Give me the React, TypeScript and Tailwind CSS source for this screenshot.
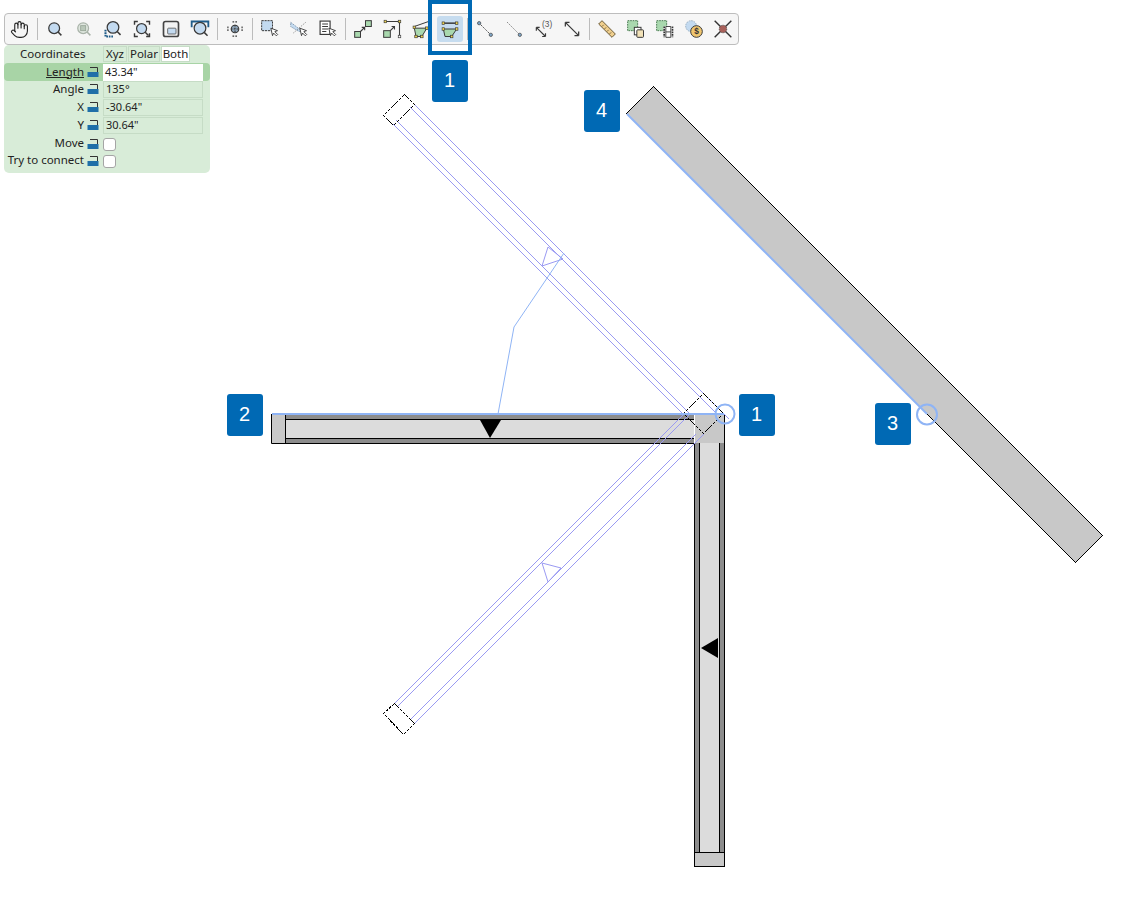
import { Hand } from "lucide-react";
import type { ReactNode } from "react";

const INK = "#3a3a3a";
const SKY = "#c3daf0";
const LEAF = "#a9d8ae";
const NAVY = "#1f5c8a";

function Glyph({ children }: { children: ReactNode }) {
  return (
    <svg width="20" height="20" viewBox="0 0 24 24" fill="none">
      {children}
    </svg>
  );
}

function Lens({ cx = 11, cy = 11, r = 6.5, fill = SKY, stroke = INK }) {
  return (
    <>
      <circle cx={cx} cy={cy} r={r} fill={fill} stroke={stroke} strokeWidth="1.5" />
      <path d={`M${cx + r * 0.72} ${cy + r * 0.72}l4 4`} stroke={stroke} strokeWidth="1.8" />
    </>
  );
}

function Pointer({ x = 13, y = 11 }) {
  return (
    <path
      d={`M${x} ${y}l8 3-3.2 1.2 3.4 3.4-1.6 1.6-3.4-3.4L15 20z`}
      fill="#fff"
      stroke={INK}
      strokeWidth="1.1"
    />
  );
}

function Node({ x, y, fill = "#f2d64b" }: { x: number; y: number; fill?: string }) {
  return <rect x={x - 1.5} y={y - 1.5} width="3" height="3" fill={fill} stroke={INK} strokeWidth="0.8" />;
}

const icons: Record<string, ReactNode> = {
  zoom: (
    <Glyph>
      <Lens />
    </Glyph>
  ),
  zoomGrey: (
    <Glyph>
      <Lens fill="#dfe6df" stroke="#a9b3a9" />
      <rect x="8" y="8" width="6" height="6" fill="#b9c7b9" stroke="#96a596" />
    </Glyph>
  ),
  zoomWindow: (
    <Glyph>
      <path d="M3 13v8h9" stroke={NAVY} strokeWidth="2.5" strokeDasharray="2 1" />
      <Lens cx={12} cy={10} r={7} />
    </Glyph>
  ),
  zoomFit: (
    <Glyph>
      <path d="M3 7V3h4M17 3h4v4M3 17v4h4M21 17v4h-4" stroke={INK} strokeWidth="1.7" />
      <Lens cx={11.5} cy={11.5} r={6} />
    </Glyph>
  ),
  zoomBox: (
    <Glyph>
      <rect x="3" y="3" width="18" height="18" rx="2.5" fill="#f3f3f3" stroke="#444" strokeWidth="2" />
      <rect x="8" y="11" width="10" height="7" rx="1" fill={SKY} stroke="#555" />
    </Glyph>
  ),
  zoomAll: (
    <Glyph>
      <path d="M2 10V3h20v7" stroke={NAVY} strokeWidth="2.2" />
      <Lens cx={12} cy={11} r={7} />
    </Glyph>
  ),
  target: (
    <Glyph>
      <circle cx="12" cy="12" r="4.5" fill="#8fa6bb" stroke={INK} strokeWidth="1.4" />
      <path
        d="M9 3.500h6M9 20.500h6M3.500 9v6M20.500 9v6M12 7v10M7 12h10"
        stroke={INK}
        strokeWidth="1.4"
        strokeDasharray="2 1.4"
      />
    </Glyph>
  ),
  selectBox: (
    <Glyph>
      <rect x="2" y="2" width="13" height="12" fill={SKY} stroke={INK} strokeWidth="1.2" strokeDasharray="2.5 1" />
      <Pointer />
    </Glyph>
  ),
  selectCross: (
    <Glyph>
      <path d="M2 4l13 10-3 1L2 9z" fill={SKY} stroke="#8aa0b5" strokeWidth="1.2" strokeDasharray="2 1" />
      <path d="M20 4L5 17" stroke="#777" strokeDasharray="1.5 1.5" />
      <Pointer />
    </Glyph>
  ),
  selectList: (
    <Glyph>
      <rect x="2.500" y="2.500" width="12" height="16" fill="#fff" stroke={INK} strokeWidth="1.4" />
      <path d="M5 6h7M5 9h7M5 12h7M5 15h5" stroke={INK} strokeWidth="1.3" />
      <Pointer />
    </Glyph>
  ),
  segment: (
    <Glyph>
      <rect x="2" y="15" width="7" height="7" fill={LEAF} stroke={INK} strokeWidth="1.2" />
      <rect x="15" y="2" width="7" height="7" fill={LEAF} stroke={INK} strokeWidth="1.2" />
      <path d="M9 15l5-5M10.500 10h3.500v3.500" stroke={INK} strokeWidth="1.3" />
    </Glyph>
  ),
  corner: (
    <Glyph>
      <path d="M4 3h17v18" stroke={INK} strokeWidth="1.3" />
      <rect x="2" y="14" width="8" height="8" fill={LEAF} stroke={INK} strokeWidth="1.2" />
      <path d="M10 14l5-5M11.500 9H15v3.500" stroke={INK} strokeWidth="1.3" />
      <Node x={4} y={3} />
      <Node x={21} y={3} />
      <Node x={21} y={21} fill="#fff" />
    </Glyph>
  ),
  polygon: (
    <Glyph>
      <path d="M4 9l17-6v8" stroke={INK} strokeWidth="1.2" />
      <path d="M4 11h15l-6 10H6z" fill={LEAF} stroke={INK} strokeWidth="1.2" />
      <Node x={4} y={10} />
      <Node x={19} y={11} />
      <Node x={13} y={21} />
      <Node x={6} y={21} />
    </Glyph>
  ),
  polygonLine: (
    <Glyph>
      <path d="M5 5h14" stroke={INK} strokeWidth="1.8" />
      <path d="M4 12h16l-6 9H6z" fill={LEAF} stroke={INK} strokeWidth="1.2" />
      <Node x={4} y={5} />
      <Node x={20} y={5} />
      <Node x={4} y={12} />
      <Node x={20} y={12} />
      <Node x={14} y={21} />
    </Glyph>
  ),
  line: (
    <Glyph>
      <path d="M5 5l14 14" stroke={INK} strokeDasharray="2 1" />
      <circle cx="5" cy="5" r="2" fill="#7fa6c8" stroke={INK} strokeWidth="0.8" />
      <circle cx="19" cy="19" r="2" fill="#7fa6c8" stroke={INK} strokeWidth="0.8" />
    </Glyph>
  ),
  lineEnd: (
    <Glyph>
      <path d="M4 4l15 15" stroke={INK} strokeDasharray="1.5 2" />
      <circle cx="19" cy="19" r="2" fill="#7fa6c8" stroke={INK} strokeWidth="0.8" />
    </Glyph>
  ),
  stretchCount: (
    <Glyph>
      <path d="M4 10l11 11M4 10v4M4 10h4M15 21v-4M15 21h-4" stroke={INK} strokeWidth="1.4" />
      <text x="17" y="10" textAnchor="middle" fontSize="10" fill="#555" fontFamily="Liberation Sans, sans-serif">
        (3)
      </text>
    </Glyph>
  ),
  stretch: (
    <Glyph>
      <path d="M4 4l16 16M4 4v5M4 4h5M20 20v-5M20 20h-5" stroke={INK} strokeWidth="1.5" />
    </Glyph>
  ),
  ruler: (
    <Glyph>
      <path d="M6 2L22 18 18 22 2 6z" fill="#f0cf8e" stroke="#6b5a36" strokeWidth="1.2" />
      <path d="M8 7l-2 2M11 10l-2 2M14 13l-2 2M17 16l-2 2" stroke="#6b5a36" />
    </Glyph>
  ),
  copyArea: (
    <Glyph>
      <rect x="2" y="2" width="12" height="12" fill={LEAF} stroke="#4d7d55" strokeWidth="1.2" strokeDasharray="2 1" />
      <rect x="10" y="10" width="8" height="9" fill="#fff" stroke={INK} strokeWidth="1.2" />
      <rect x="13" y="13" width="8" height="9" rx="1" fill="#f2e2b8" stroke={INK} strokeWidth="1.2" />
    </Glyph>
  ),
  filmArea: (
    <Glyph>
      <rect x="2" y="2" width="12" height="12" fill={LEAF} stroke="#4d7d55" strokeWidth="1.2" strokeDasharray="2 1" />
      <rect x="10" y="9" width="12" height="13" fill="#fff" />
      <path d="M11 9v13M21 9v13" stroke="#333" strokeWidth="2" strokeDasharray="2 1" />
      <path d="M13 9h6M13 15.500h6M13 22h6M13 9v13M19 9v13" stroke={INK} strokeWidth="1.1" />
    </Glyph>
  ),
  cost: (
    <Glyph>
      <circle cx="8.500" cy="8.500" r="6.500" fill={SKY} stroke="#8fa6bb" strokeDasharray="2 1" />
      <circle cx="15" cy="15" r="7" fill="#f0c66f" stroke={INK} strokeWidth="1.2" />
      <text x="15" y="18.500" textAnchor="middle" fontSize="10" fontWeight="700" fill="#333" fontFamily="Liberation Sans, sans-serif">
        $
      </text>
    </Glyph>
  ),
  remove: (
    <Glyph>
      <path d="M2 2l20 20M22 2L2 22" stroke="#333" strokeWidth="1.7" />
      <circle cx="12" cy="12" r="4.500" fill="#a8605a" stroke="#444" strokeDasharray="1.5 1" />
    </Glyph>
  ),
};

const toolGroups = [
  ["hand"],
  ["zoom", "zoomGrey", "zoomWindow", "zoomFit", "zoomBox", "zoomAll"],
  ["target"],
  ["selectBox", "selectCross", "selectList"],
  ["segment", "corner", "polygon", "polygonLine"],
  ["line", "lineEnd", "stretchCount", "stretch"],
  ["ruler", "copyArea", "filmArea", "cost", "remove"],
];

function Toolbar() {
  return (
    <div className="ml-[4px] mt-[13px] flex h-[32px] w-[735px] items-center rounded-[4px] border border-[#bdbdbd] bg-[#f6f6f6]">
      {toolGroups.map((group, i) => (
        <div key={i} className="flex items-center">
          {i > 0 && <div className="mx-[2.5px] h-[22px] w-px bg-[#bcbcbc]" />}
          {group.map((name) => (
            <div key={name} className="flex h-[26px] w-[29px] items-center justify-center">
              <div
                className={`flex h-[26px] w-[26px] items-center justify-center rounded-[3px] ${
                  name === "polygonLine" ? "bg-[#c6dcef]" : ""
                }`}
              >
                {name === "hand" ? <Hand size={19} strokeWidth={1.4} color="#222" /> : icons[name]}
              </div>
            </div>
          ))}
        </div>
      ))}
    </div>
  );
}

function Lock() {
  return (
    <svg width="12" height="12" viewBox="0 0 12 12" fill="none" className="shrink-0">
      <rect x="0.500" y="6" width="11" height="5" fill="#1f6fa8" />
      <path d="M3 1.500h7.500V6" stroke="#333" strokeWidth="1" />
    </svg>
  );
}

function Row({
  label,
  value,
  active,
  check,
}: {
  label: string;
  value?: string;
  active?: boolean;
  check?: boolean;
}) {
  return (
    <div
      className={`flex items-center rounded-[4px] pr-[7px] ${
        active ? "relative -mb-px h-[18px] bg-[#a8d4a6]" : check ? "h-[17px]" : "h-[18px]"
      }`}
    >
      <span className={`w-[80px] whitespace-nowrap pb-[1px] text-right ${active ? "underline" : ""}`}>{label}</span>
      <span className="ml-[3px] flex w-[16px]">
        <Lock />
      </span>
      {check ? (
        <span className="mt-[1px] block h-[13px] w-[13px] rounded-[3px] border border-[#a5a5a5] bg-white" />
      ) : (
        <span
          className={`flex h-[17px] flex-1 items-center pb-[1px] pl-[2px] text-[11px] ${
            active ? "bg-white" : "border border-[#c6dcc6]"
          }`}
        >
          {value}
        </span>
      )}
    </div>
  );
}

function CoordinatesPanel() {
  return (
    <div className="ml-[4px] h-[128px] w-[206px] rounded-[5px] bg-[#d8ecd8] font-['Noto_Sans',sans-serif] text-[11.5px] leading-none text-[#222]">
      <div className="flex h-[18px] items-center">
        <span className="w-[99px] pl-[16px]">Coordinates</span>
        <div className="flex h-[16px] items-stretch gap-px">
          <span className="flex w-[24px] items-center justify-center border border-[#c6dcc6]">Xyz</span>
          <span className="flex w-[32px] items-center justify-center border border-[#c6dcc6]">Polar</span>
          <span className="flex w-[29px] items-center justify-center border border-[#c6dcc6] bg-white">Both</span>
        </div>
      </div>
      <Row label="Length" value={'43.34"'} active />
      <Row label="Angle" value="135°" />
      <Row label="X" value={'-30.64"'} />
      <Row label="Y" value={'30.64"'} />
      <div className="h-[1px]" />
      <Row label="Move" check />
      <Row label="Try to connect" check />
    </div>
  );
}

const GHOST = "#9a9af2";
const SNAP = "#8fb4f5";

function Drawing() {
  return (
    <svg className="absolute left-0 top-0" width="1134" height="910" viewBox="0 0 1134 910" fill="none">
      {/* horizontal wall */}
      <rect x="272" y="415" width="422" height="28" fill="#dcdcdc" />
      <rect x="272" y="415" width="13" height="28" fill="#c8c8c8" />
      <rect x="285" y="415" width="409" height="4" fill="#8c8c8c" />
      <rect x="285" y="439" width="409" height="4" fill="#8c8c8c" />
      <path d="M271.500 414V443.500H694M285.500 415V443M285 419.500H694M285 438.500H694" stroke="#000" />
      <path d="M480 420H501L490 438z" fill="#000" />

      {/* vertical wall */}
      <rect x="695" y="443" width="29" height="424" fill="#dcdcdc" />
      <rect x="695" y="443" width="4" height="410" fill="#8c8c8c" />
      <rect x="720" y="443" width="4" height="410" fill="#8c8c8c" />
      <path d="M694.500 443V867M699.500 443V853M719.500 443V853M724.500 414V867M694 852.500H725" stroke="#000" />
      <rect x="695" y="853" width="29" height="13" fill="#c8c8c8" />
      <path d="M694 866.500H725" stroke="#000" />
      <path d="M718 638V658L701 648z" fill="#000" />

      {/* shared corner */}
      <rect x="695" y="415" width="29" height="28" fill="#c8c8c8" />

      {/* ghost walls */}
      <g stroke={GHOST} strokeWidth="1" shapeRendering="crispEdges">
        <path d="M414.500 104.500L729.500 419.500M410.500 107.500L716.500 413.500" />
        <path d="M393.500 124.500L683.500 414.500M396.500 120.500L690.500 414.500" />
        <path d="M394.500 703.500L684.500 413.500M397.500 706.500L688.500 415.500" />
        <path d="M414.500 723.500L703.500 434.500M410.500 719.500L695.500 434.500" />
      </g>
      <g stroke={GHOST} strokeWidth="1">
        <path d="M548 247L542 266L563 259z" />
        <path d="M542 563L561 568L548 582z" />
      </g>
      <g stroke="#000" strokeDasharray="3 1" shapeRendering="crispEdges">
        <path d="M404.500 94.500L414.500 104.500L393.500 125.500L383.500 115.500z" />
        <path d="M394.500 703.500L414.500 723.500L403.500 734.500L383.500 713.500z" />
        <path d="M703.500 393.500L723.500 413.500L703.500 433.500L683.500 413.500z" />
      </g>

      <path d="M272 414H724" stroke={SNAP} strokeWidth="2" />
      <path d="M498 414L514 327L564 253" stroke={SNAP} strokeWidth="1" />
      <circle cx="725" cy="414" r="9.500" stroke={SNAP} strokeWidth="2" />

      {/* wall being placed */}
      <path
        d="M653.500 86.500L1102.500 535.500L1075.500 562.500L626.500 113.500z"
        fill="#c8c8c8"
        stroke="#000"
        shapeRendering="crispEdges"
      />
      <path d="M627 114L927 414" stroke={SNAP} strokeWidth="2" />
      <circle cx="927" cy="414.500" r="10" stroke={SNAP} strokeWidth="2" />
    </svg>
  );
}

function Badge({ n, className }: { n: number; className: string }) {
  return (
    <div
      className={`absolute flex h-[42px] w-[36px] items-center justify-center rounded-[3px] bg-[#0069b4] pb-[2px] pr-[1px] font-['Liberation_Sans',sans-serif] text-[20px] text-white ${className}`}
    >
      {n}
    </div>
  );
}

export default function App() {
  return (
    <div className="relative h-[910px] w-[1134px] overflow-hidden bg-white">
      <Drawing />
      <div className="relative flex flex-col">
        <Toolbar />
        <CoordinatesPanel />
      </div>
      <div className="absolute left-[428px] top-0 h-[55px] w-[44px] border-[4px] border-[#0069b4]" />
      <Badge n={1} className="left-[432px] top-[60px]" />
      <Badge n={4} className="left-[584px] top-[90px]" />
      <Badge n={2} className="left-[227px] top-[394px]" />
      <Badge n={1} className="left-[739px] top-[394px]" />
      <Badge n={3} className="left-[875px] top-[403px]" />
    </div>
  );
}
